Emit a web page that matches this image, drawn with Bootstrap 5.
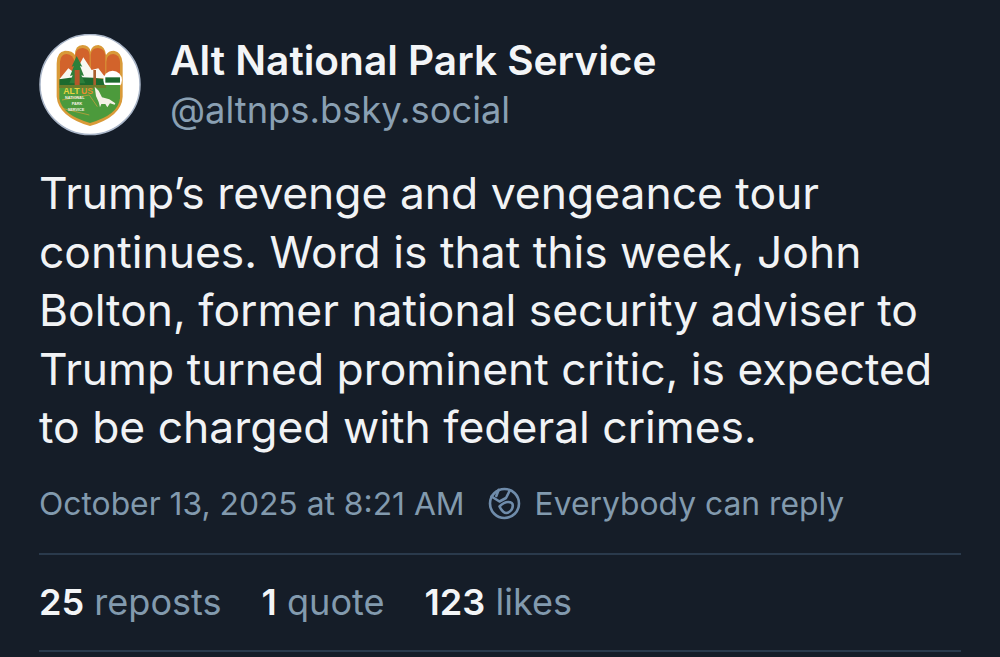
<!doctype html>
<html lang="en"><head><meta charset="utf-8"><title>Post</title>
<link href="https://cdn.jsdelivr.net/npm/bootstrap@5.3.0/dist/css/bootstrap.min.css" rel="stylesheet">
<style>
html,body{height:657px;overflow:hidden}
body{background:#151d28;font-family:Inter,"Liberation Sans",sans-serif;font-optical-sizing:none;color:#f1f3f5}
.post-wrap{padding:34px 39px 0 39px}
.avatar-box{width:102px;height:102px;flex:none}
.author-name{font-size:40.6px;font-weight:600;line-height:49px;color:#f3f5f7}
.author-handle{font-size:36.3px;line-height:50px;color:#8aa0b3}
.author-col{margin-left:29px;margin-top:2px}
.post-text{font-size:44.4px;line-height:58.5px;margin:28px 0 0 0;color:#f1f3f5;white-space:nowrap}
.meta-row{margin-top:24px;height:46px;color:#84999f;color:#829aae;font-size:31.8px;line-height:46px;white-space:nowrap}
.meta-gap{margin-left:23px;margin-right:14px}
.rule-line{height:2px;background:#2a3a4c}
.rule-top{margin-top:26px}
.stats-row{height:95px;font-size:36.1px;gap:40px;width:922px}
.stats-row b{font-weight:600;color:#f3f5f7}
.stats-row span{color:#829aae}
</style></head>
<body>
<div class="post-wrap">
  <div class="d-flex align-items-start">
    <div class="avatar-box">
      <svg viewBox="0 0 102 102" width="102" height="102" aria-label="Alt National Park Service logo">
        <circle cx="51" cy="50.500" r="50" fill="#fff" stroke="#aab6c8" stroke-width="1.500"/>
        <g transform="translate(-19,-14) scale(.3333)">
          <path d="M110 130Q110 95 135 92Q158 92 165 105Q165 75 188 75Q208 75 212 95Q215 75 235 75Q255 78 258 105Q265 92 282 92Q305 95 308 130V230Q305 290 210 318Q115 290 110 230Z" fill="#d99a38"/>
          <path d="M120 175V125Q122 102 140 102Q160 104 163 125V175Z" fill="#d2632b"/>
          <path d="M166 170V105Q168 84 188 84Q208 86 209 105V170Z" fill="#d2632b"/>
          <path d="M212 170V105Q214 84 234 84Q254 86 256 105V170Z" fill="#d2632b"/>
          <path d="M259 175V125Q260 102 280 102Q298 104 300 125V175Z" fill="#d2632b"/>
          <path d="M118 178L145 145 165 160 190 112 215 150 235 145 258 175Z" fill="#f8f8f2"/>
          <path d="M118 178Q180 165 258 178V195H118Z" fill="#1c6a2e"/>
          <circle cx="278" cy="180" r="28" fill="#fff"/>
          <path d="M256 172H300V188H256Z" fill="#1c6a2e"/>
          <path d="M170 108L155 140 162 138 150 168 158 166 148 190H196L184 166 192 168 180 138 187 140Z" fill="#2d7f3a"/>
          <rect x="164" y="150" width="15" height="55" fill="#b5562a"/>
          <rect x="220" y="150" width="8" height="45" fill="#a9602d"/>
          <path d="M118 195H300V235Q295 285 210 309Q125 285 118 235Z" fill="#4c9a3c"/>
          <path d="M118 195H258V204H118Z" fill="#6b7d2b"/>
          <path d="M126 240L208 225 232 260M126 265L208 285" fill="none" stroke="#d9a23c" stroke-width="2"/>
          <path d="M224 200L236 212 246 232 268 238 286 250 284 254 270 250 262 262 256 252 244 252 240 262 236 246 228 228Z" fill="#f4f1e6"/>
          <text x="130" y="222" font-family="Liberation Sans" font-size="26" font-weight="700" fill="#e8d23e">ALT</text>
          <text x="183" y="222" font-family="Liberation Sans" font-size="26" font-weight="700" fill="#e88a2e">US</text>
          <text x="135" y="238" font-family="Liberation Sans" font-size="11.500" font-weight="700" fill="#f4f1e6">NATIONAL</text>
          <text x="155" y="254" font-family="Liberation Sans" font-size="11.500" font-weight="700" fill="#f4f1e6">PARK</text>
          <text x="143" y="273" font-family="Liberation Sans" font-size="11.500" font-weight="700" fill="#f4f1e6">SERVICE</text>
        </g>
      </svg>
    </div>
    <div class="author-col">
      <div class="author-name">Alt National Park Service</div>
      <div class="author-handle">@altnps.bsky.social</div>
    </div>
  </div>
  <p class="post-text">Trump’s revenge and vengeance tour<br>continues. Word is that this week, John<br>Bolton, former national security adviser to<br>Trump turned prominent critic, is expected<br>to be charged with federal crimes.</p>
  <div class="meta-row d-flex align-items-center">
    <span>October 13, 2025 at 8:21 AM</span>
    <svg class="meta-gap" width="33" height="33" viewBox="0 0 33 33" fill="none" stroke="#6f8cab" stroke-width="2.600" stroke-linejoin="round" stroke-linecap="round" aria-hidden="true">
      <circle cx="16.500" cy="16.500" r="14.500"/>
      <path d="M3.500 9.500l8 5 6.500-3.500 3.500-7"/>
      <path d="M10.700 2.800L8.300 9"/>
      <path d="M11.500 19.500c3-3 6-4.500 8.500-4.500 3 0 4.800 1.500 4.800 3.500 0 4-3.500 7.500-6.500 7.500-3 0-5-3-6.800-6.500z"/>
    </svg>
    <span>Everybody can reply</span>
  </div>
  <div class="rule-line rule-top"></div>
  <div class="stats-row d-flex align-items-center">
    <div><b>25</b> <span>reposts</span></div>
    <div><b>1</b> <span>quote</span></div>
    <div><b>123</b> <span>likes</span></div>
  </div>
  <div class="rule-line"></div>
</div>
</body></html>
